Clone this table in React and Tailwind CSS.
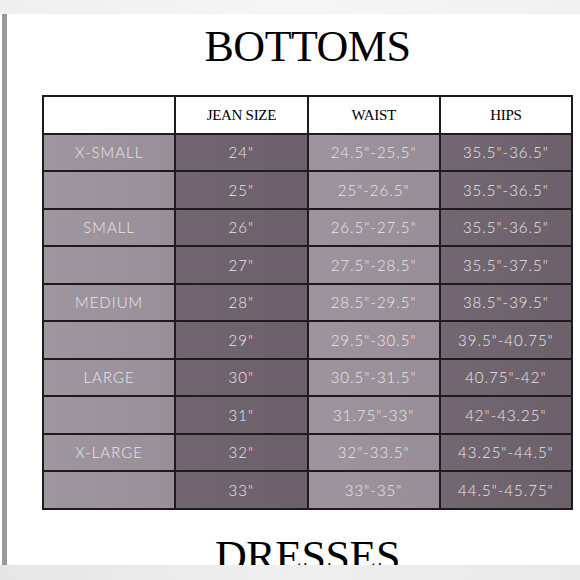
const rows = [
  ["X-SMALL", '24"', '24.5"-25.5"', '35.5"-36.5"'],
  ["", '25"', '25"-26.5"', '35.5"-36.5"'],
  ["SMALL", '26"', '26.5"-27.5"', '35.5"-36.5"'],
  ["", '27"', '27.5"-28.5"', '35.5"-37.5"'],
  ["MEDIUM", '28"', '28.5"-29.5"', '38.5"-39.5"'],
  ["", '29"', '29.5"-30.5"', '39.5"-40.75"'],
  ["LARGE", '30"', '30.5"-31.5"', '40.75"-42"'],
  ["", '31"', '31.75"-33"', '42"-43.25"'],
  ["X-LARGE", '32"', '32"-33.5"', '43.25"-44.5"'],
  ["", '33"', '33"-35"', '44.5"-45.75"'],
];

// light / dark mauve, alternating per column
const cellBg = [
  "bg-gradient-to-r from-[#9f979f] to-[#988f98]",
  "bg-gradient-to-r from-[#716670] to-[#6c616b]",
  "bg-gradient-to-r from-[#9d949d] to-[#978e97]",
  "bg-gradient-to-r from-[#736871] to-[#6c616b]",
];

const serif = "font-['Liberation_Serif',serif]";

export default function App() {
  return (
    <div className="w-[580px] h-[580px] bg-white flex flex-col overflow-hidden">
      <div className="h-[14px] shrink-0 bg-gradient-to-r from-[#efefef] via-[#f6f6f6] to-[#f1f1f1]" />

      <div className="flex h-[551px] overflow-hidden">
        <div className="ml-[2px] w-[5px] bg-[#9b979b] shrink-0" />

        <div className="ml-[35px] w-[531px] flex flex-col items-center pt-[11px]">
          <h1 className={`${serif} text-[44px] leading-[44px] text-black tracking-[-0.5px]`}>
            BOTTOMS
          </h1>

          <div className="mt-[26px] w-full bg-[#1e1a1e] p-[2px] grid grid-cols-4 gap-[2px]">
            <div className="h-[35.5px] bg-white" />
            {["JEAN SIZE", "WAIST", "HIPS"].map((h) => (
              <div
                key={h}
                className={`h-[35.5px] bg-white flex items-center justify-center ${serif} text-[15px] text-black tracking-[-0.3px]`}
              >
                {h}
              </div>
            ))}

            {rows.map((r, i) =>
              r.map((txt, j) => (
                <div
                  key={`${i}-${j}`}
                  className={`h-[35.5px] flex items-center justify-center ${cellBg[j]} font-['Lato',sans-serif] font-light text-[15px] tracking-[1px] text-[#ece7eb]`}
                >
                  {txt}
                </div>
              ))
            )}
          </div>

          <h2 className={`${serif} mt-[25px] text-[44px] leading-[44px] text-black tracking-[-0.5px]`}>
            DRESSES
          </h2>
        </div>
      </div>

      <div className="h-[15px] shrink-0 bg-gradient-to-r from-[#e6e6e6] via-[#efefef] to-[#e9e9e9]" />
    </div>
  );
}
